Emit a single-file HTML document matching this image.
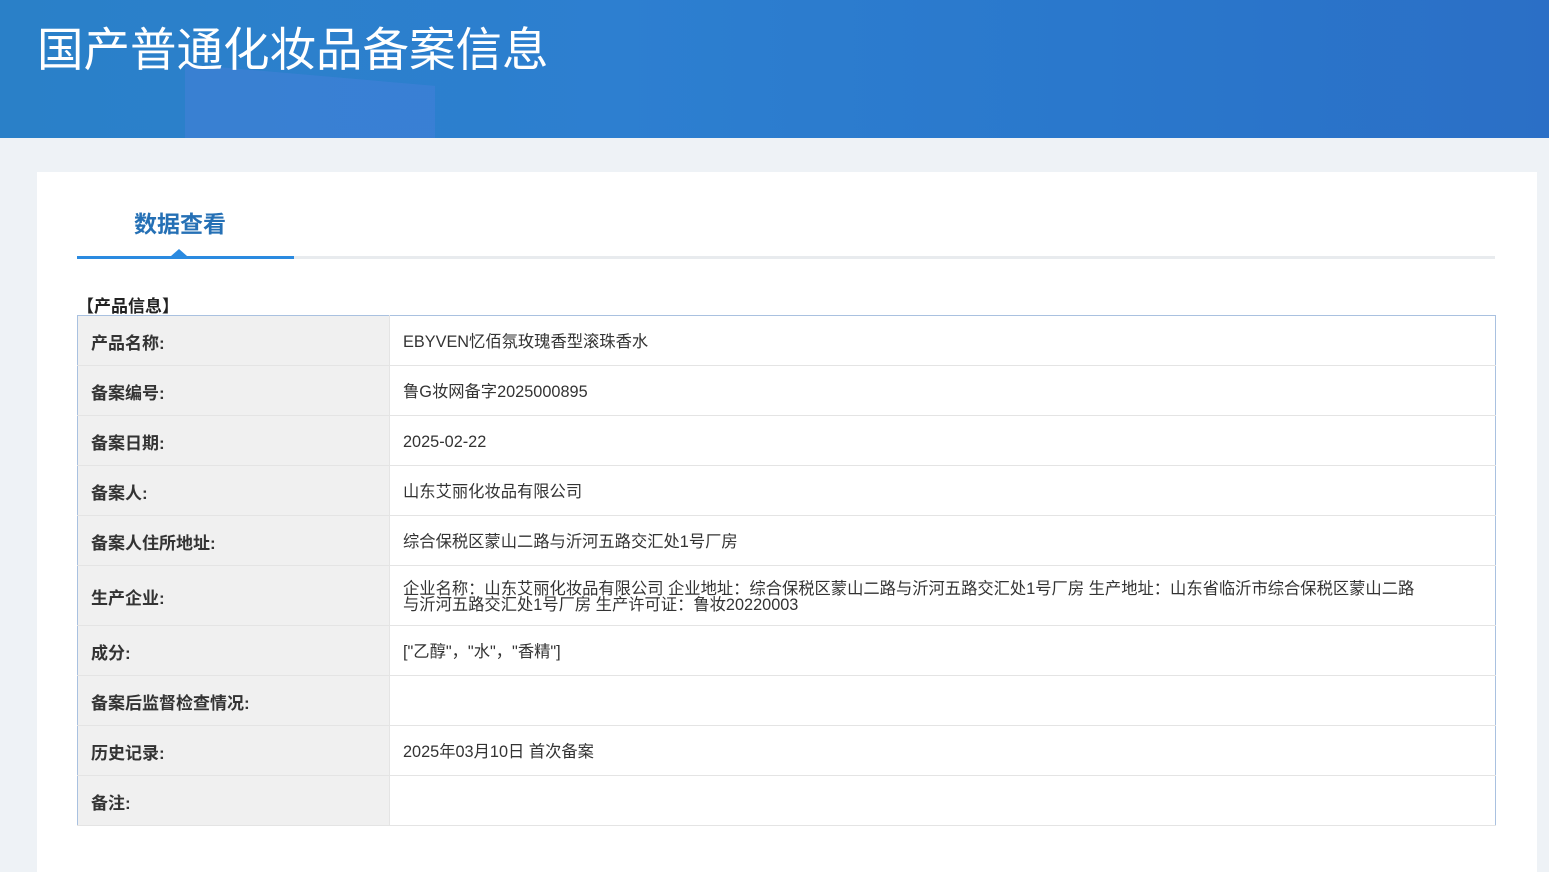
<!DOCTYPE html>
<html><head><meta charset="utf-8"><style>
body{margin:0;width:1549px;height:854px;background:#eef2f6;font-family:"Liberation Sans","Noto Sans CJK SC",sans-serif;overflow:hidden;position:relative}
.hdr{position:absolute;left:0;top:0;width:1549px;height:138px;background:linear-gradient(90deg,#2a80c8 0%,#2d7fd0 40%,#2a78cc 70%,#2b6fc6 100%);overflow:hidden}
.hdr .s1{position:absolute;left:185px;top:75px;width:250px;height:80px;background:rgba(90,130,230,.3);transform:skewY(5deg)}
.hdr h1{position:absolute;left:37px;top:13px;margin:0;color:#fff;font-weight:normal;font-size:46.5px;letter-spacing:0}
.card{position:absolute;left:37px;top:172px;width:1500px;height:700px;background:#fff}
.tab{position:absolute;left:97px;top:33px;font-size:23px;font-weight:bold;color:#2570b5}
.gl{position:absolute;left:40px;top:84px;width:1418px;height:3px;background:#e8ebee}
.bl{position:absolute;left:40px;top:84px;width:217px;height:3px;background:#2a8ae0}
.tri{position:absolute;left:134px;top:77px;width:0;height:0;border-left:8px solid transparent;border-right:8px solid transparent;border-bottom:7px solid #2a8ae0}
.sec{position:absolute;left:40px;top:120px;font-size:17px;font-weight:bold;color:#222}
table{position:absolute;left:40px;top:143px;width:1419px;border-collapse:collapse;border:1px solid #a9c1e0;font-size:16.3px;color:#333}
td{border-bottom:1px solid #e4e4e4;height:47px;padding:2px 0 0 13px}
td.l{width:298px;background:#f0f0f0;font-weight:bold;border-right:1px solid #e4e4e4;font-size:17px}
td.r{line-height:16px}
</style></head><body>
<div class="hdr"><div class="s1"></div><h1>国产普通化妆品备案信息</h1></div>
<div class="card">
<div class="tab">数据查看</div>
<div class="gl"></div><div class="bl"></div><div class="tri"></div>
<div class="sec">【产品信息】</div>
<table>
<tr><td class="l">产品名称:</td><td class="r">EBYVEN忆佰氛玫瑰香型滚珠香水</td></tr>
<tr><td class="l">备案编号:</td><td class="r">鲁G妆网备字2025000895</td></tr>
<tr><td class="l">备案日期:</td><td class="r">2025-02-22</td></tr>
<tr><td class="l">备案人:</td><td class="r">山东艾丽化妆品有限公司</td></tr>
<tr><td class="l">备案人住所地址:</td><td class="r">综合保税区蒙山二路与沂河五路交汇处1号厂房</td></tr>
<tr><td class="l" style="height:57px">生产企业:</td><td class="r" style="padding-right:70px">企业名称：山东艾丽化妆品有限公司 企业地址：综合保税区蒙山二路与沂河五路交汇处1号厂房 生产地址：山东省临沂市综合保税区蒙山二路与沂河五路交汇处1号厂房 生产许可证：鲁妆20220003</td></tr>
<tr><td class="l">成分:</td><td class="r">["乙醇"，"水"，"香精"]</td></tr>
<tr><td class="l">备案后监督检查情况:</td><td class="r"></td></tr>
<tr><td class="l">历史记录:</td><td class="r">2025年03月10日 首次备案</td></tr>
<tr><td class="l">备注:</td><td class="r"></td></tr>
</table>
</div>
</body></html>
